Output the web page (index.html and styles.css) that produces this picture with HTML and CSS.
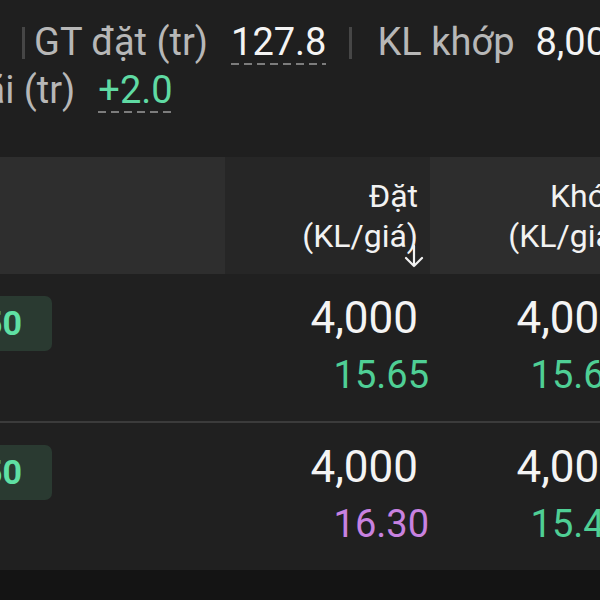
FILE: index.html
```html
<!DOCTYPE html>
<html lang="vi">
<head>
<meta charset="utf-8">
<title>Lệnh</title>
<link rel="stylesheet" href="styles.css">
</head>
<body>
<div class="page">
  <section class="summary">
    <div class="line line-1">
      <span class="sep"></span>
      <span class="pair">
        <span class="label">GT đặt (tr)</span>
        <span class="value dashed">127.8</span>
      </span>
      <span class="sep sep-mid"></span>
      <span class="pair pair-kl">
        <span class="label">KL khớp</span>
        <span class="value">8,000</span>
      </span>
    </div>
    <div class="line line-2">
      <span class="pair">
        <span class="label">Lãi (tr)</span>
        <span class="value up dashed">+2.0</span>
      </span>
    </div>
  </section>

  <section class="table">
    <div class="row head">
      <div class="cell c1"></div>
      <div class="cell c2 sorted">
        <span class="h-line">Đặt</span>
        <span class="h-line">(KL/giá)</span>
        <svg class="sort-arrow" width="22" height="24" viewBox="0 0 22 24" aria-hidden="true">
          <path d="M10 1 V21 M2 13 L10 21 L18 13" fill="none" stroke="#f2f2f2" stroke-width="2.2" stroke-linecap="round" stroke-linejoin="round"/>
        </svg>
      </div>
      <div class="cell c3">
        <span class="h-line">Khớp</span>
        <span class="h-line">(KL/giá)</span>
      </div>
    </div>

    <div class="row body-row">
      <div class="cell c1"><span class="badge">15.50</span></div>
      <div class="cell c2 num">
        <span class="qty">4,000</span>
        <span class="price up p2">15.65</span>
      </div>
      <div class="cell c3 num">
        <span class="qty">4,000</span>
        <span class="price up p3">15.65</span>
      </div>
    </div>
    <div class="divider"></div>
    <div class="row body-row">
      <div class="cell c1"><span class="badge">16.50</span></div>
      <div class="cell c2 num">
        <span class="qty">4,000</span>
        <span class="price ceil p2">16.30</span>
      </div>
      <div class="cell c3 num">
        <span class="qty">4,000</span>
        <span class="price up p3">15.45</span>
      </div>
    </div>
  </section>
  <div class="footer"></div>
</div>
</body>
</html>
```

FILE: styles.css
```css
* { box-sizing: border-box; }

html, body {
  margin: 0;
  padding: 0;
  background: #141414;
  overflow: hidden;
}

body {
  width: 600px;
  height: 600px;
  font-family: Roboto, "Noto Sans", "Liberation Sans", sans-serif;
  color: #f2f2f2;
}

.page {
  width: 600px;
  height: 600px;
  overflow: hidden;
  display: flex;
  flex-direction: column;
}

/* ---------- summary ---------- */
.summary {
  height: 157px;
  background: #1f1f1f;
  padding-top: 18px;
  flex: none;
  white-space: nowrap;
}

.line {
  display: flex;
  align-items: center;
  height: 48px;
  font-size: 38px;
  line-height: 48px;
}

.line > * { flex: none; }

.line-1 { padding-left: 22px; }
.line-2 { margin-left: -36px; }

.pair {
  display: inline-flex;
  align-items: center;
  gap: 23px;
}

.pair-kl { gap: 21px; }

.label { color: #b7b7b7; }
.value { color: #f4f4f4; }
.value.up { color: #5fdaa3; }

.dashed {
  background-image: repeating-linear-gradient(to right, #7c7c7c 0 8px, transparent 8px 13px);
  background-size: 100% 2px;
  background-repeat: no-repeat;
  background-position: 0 45px;
}

.sep {
  display: inline-block;
  width: 3px;
  height: 32px;
  background: #464646;
  margin-right: 9px;
  margin-top: 2px;
}

.sep-mid {
  margin-left: 23px;
  margin-right: 25px;
}

/* ---------- table ---------- */
.table {
  width: 636px;
  flex: none;
  background: #202020;
}

.row {
  display: grid;
  grid-template-columns: 225px 205px 206px;
}

.head {
  height: 117px;
  font-size: 32px;
  line-height: 40px;
}

.head .cell {
  display: flex;
  flex-direction: column;
  align-items: flex-end;
  justify-content: center;
  padding-right: 12px;
  background: #2d2d2d;
}

.head .c1 { background: #2e2e2e; }
.head .c2 { background: #262626; position: relative; }
.head .c3 { background: #2d2d2d; }

.h-line { color: #f2f2f2; white-space: nowrap; }

.sort-arrow {
  position: absolute;
  left: 179px;
  top: 88px;
}

.body-row {
  height: 147px;
  background: #202020;
}

.body-row .c1 {
  padding-top: 22px;
}

.badge {
  display: inline-block;
  height: 55px;
  line-height: 55px;
  margin-left: -80px;
  padding: 0 30px 0 14px;
  border-radius: 7px;
  background: #2a3a31;
  color: #5fe0a4;
  font-size: 34px;
  font-weight: 700;
}

.num {
  display: flex;
  flex-direction: column;
  align-items: flex-end;
  padding-right: 12px;
  padding-top: 18px;
  white-space: nowrap;
}

.qty {
  font-size: 44px;
  line-height: 52px;
  color: #f4f4f4;
}

.price {
  font-size: 38px;
  line-height: 62px;
}

.price.p2 { margin-right: -11px; }
.price.p3 { margin-right: -2px; }

.price.up { color: #4fcf95; }
.price.ceil { color: #c882e0; }

.divider {
  height: 2px;
  background: #3b3b3b;
}

.footer {
  flex: 1;
  background: #141414;
}
```
